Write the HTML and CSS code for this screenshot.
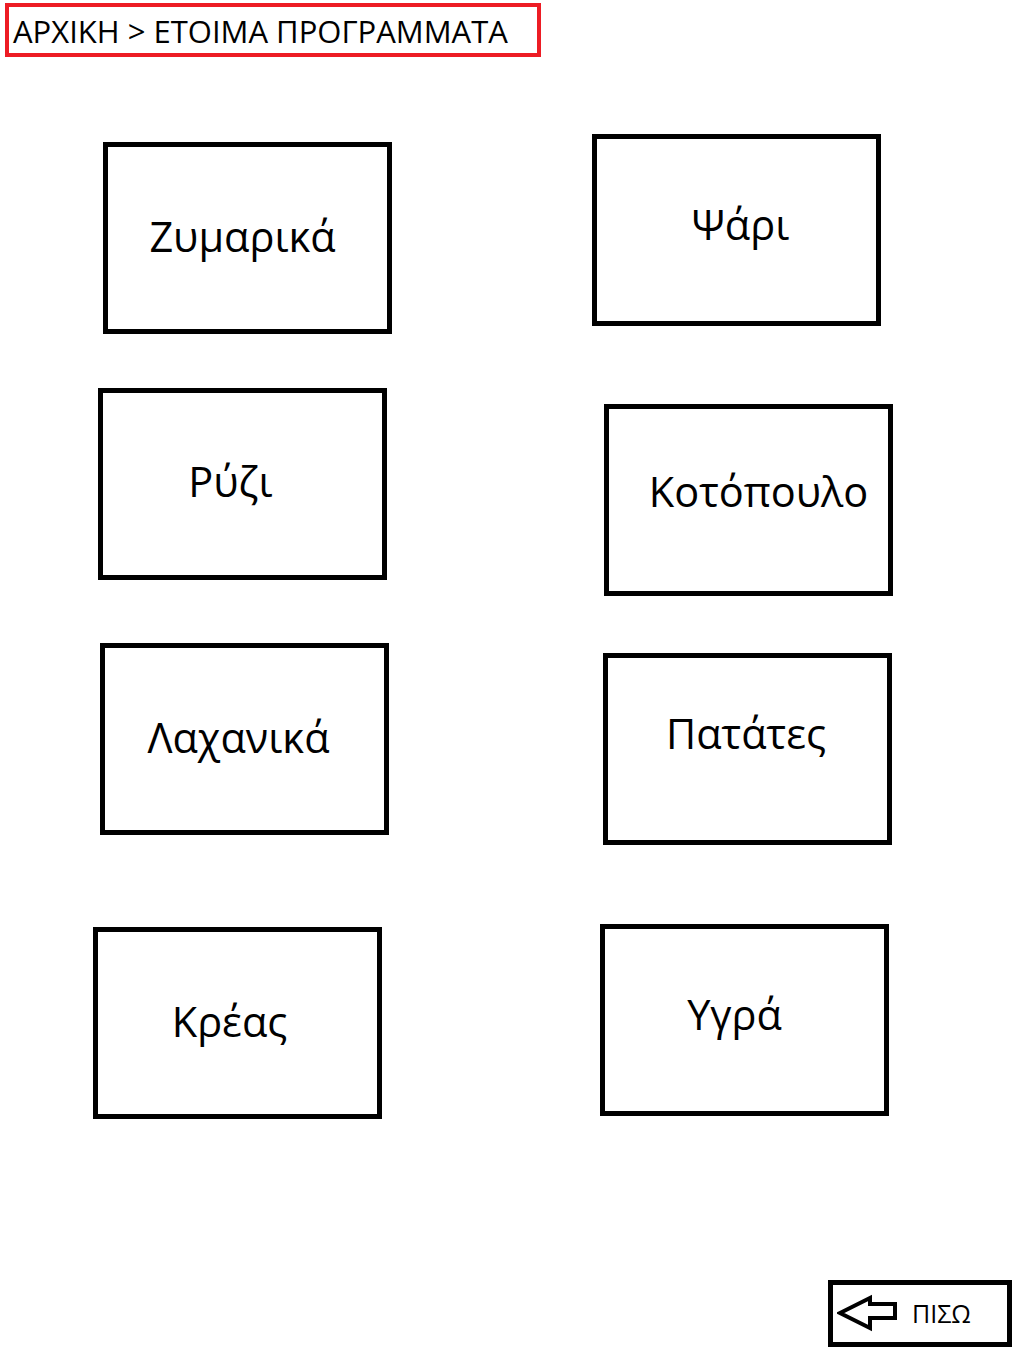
FILE: index.html
```html
<!DOCTYPE html>
<html lang="el">
<head>
    <meta charset="UTF-8">
    <title>Έτοιμα Προγράμματα</title>
    <link rel="stylesheet" href="styles.css">
</head>
<body>

    <div class="breadcrumb">ΑΡΧΙΚΗ &gt; ΕΤΟΙΜΑ ΠΡΟΓΡΑΜΜΑΤΑ</div>

    <div class="board">
        <div class="row row-1">
            <div class="tile t-zymarika">Ζυμαρικά</div>
            <div class="tile t-psari">Ψάρι</div>
        </div>
        <div class="row row-2">
            <div class="tile t-ryzi">Ρύζι</div>
            <div class="tile t-kotopoulo">Κοτόπουλο</div>
        </div>
        <div class="row row-3">
            <div class="tile t-lachanika">Λαχανικά</div>
            <div class="tile t-patates">Πατάτες</div>
        </div>
        <div class="row row-4">
            <div class="tile t-kreas">Κρέας</div>
            <div class="tile t-ygra">Υγρά</div>
        </div>
    </div>

    <div class="footer">
        <button class="btn-back" type="button">
            <svg class="arrow" width="62" height="38" viewBox="0 0 62 38">
                <path d="M3 19 L33 4 L33 10 L58 10 L58 24 L33 24 L33 34 Z" fill="none" stroke="#000" stroke-width="4" stroke-linejoin="miter"/>
            </svg>
            <span>ΠΙΣΩ</span>
        </button>
    </div>

</body>
</html>
```

FILE: styles.css
```css
body {
    font-family: "Open Sans", "DejaVu Sans", sans-serif;
    margin: 0;
    background: #fff;
    color: #000;
}
.breadcrumb {
    box-sizing: border-box;
    width: 536px;
    height: 54px;
    margin: 3px 0 0 5px;
    padding: 4px 0 0 4px;
    border: 4px solid #ed1c24;
    font-size: 31px;
    line-height: 40px;
    white-space: nowrap;
}
.board {
    margin-top: 77px;
}
.row {
    display: flex;
    align-items: flex-start;
}
.row-2 { margin-top: 54px; }
.row-3 { margin-top: 47px; }
.row-4 { margin-top: 79px; }
.tile {
    box-sizing: border-box;
    width: 289px;
    height: 192px;
    border: 5px solid #000;
    display: flex;
    align-items: center;
    justify-content: center;
    font-size: 41.5px;
}
.t-zymarika { margin: 8px 0 0 103px; padding: 0 10px 4px 0; }
.t-psari { margin-left: 200px; padding: 0 0 12px 8px; }
.t-ryzi { margin-left: 98px; padding: 0 24px 6px 0; }
.t-kotopoulo { margin: 16px 0 0 217px; padding: 0 0 18px 20px; }
.t-lachanika { margin-left: 100px; padding: 0 12px 4px 0; }
.t-patates { margin: 10px 0 0 214px; padding: 0 3px 32px 0; }
.t-kreas { margin: 3px 0 0 93px; padding: 0 16px 4px 0; }
.t-ygra { margin-left: 218px; padding: 0 20px 12px 0; }
.footer {
    display: flex;
    justify-content: flex-end;
    margin-top: 161px;
    padding-right: 4px;
}
.btn-back {
    box-sizing: border-box;
    width: 184px;
    height: 67px;
    border: 5px solid #000;
    background: #fff;
    display: flex;
    align-items: center;
    gap: 13px;
    padding: 0 0 2px 4px;
    font-family: "Open Sans", "DejaVu Sans", sans-serif;
    font-size: 25px;
    color: #000;
}
.arrow {
    display: block;
}
```
